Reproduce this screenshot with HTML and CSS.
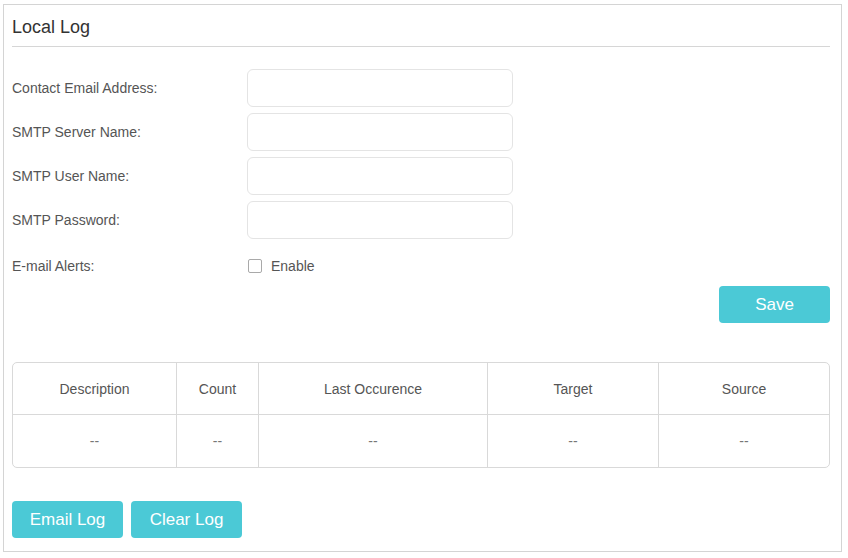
FILE: index.html
```html
<!DOCTYPE html>
<html>
<head>
<meta charset="utf-8">
<link rel="stylesheet" href="styles.css">
</head>
<body>
<div class="frame">
  <h2 class="title">Local Log</h2>
  <div class="form">
    <div class="row">
      <label class="lbl">Contact Email Address:</label>
      <input class="field" type="text">
    </div>
    <div class="row">
      <label class="lbl">SMTP Server Name:</label>
      <input class="field" type="text">
    </div>
    <div class="row">
      <label class="lbl">SMTP User Name:</label>
      <input class="field" type="text">
    </div>
    <div class="row">
      <label class="lbl">SMTP Password:</label>
      <input class="field" type="password">
    </div>
    <div class="row row-check">
      <label class="lbl">E-mail Alerts:</label>
      <span class="check"><span class="box"></span><span class="check-text">Enable</span></span>
    </div>
  </div>
  <div class="save-wrap"><button class="btn btn-save">Save</button></div>
  <table class="log">
    <colgroup>
      <col style="width:164px"><col style="width:82px"><col style="width:229px"><col style="width:171px"><col>
    </colgroup>
    <thead>
      <tr><th>Description</th><th>Count</th><th>Last Occurence</th><th>Target</th><th>Source</th></tr>
    </thead>
    <tbody>
      <tr><td>--</td><td>--</td><td>--</td><td>--</td><td>--</td></tr>
    </tbody>
  </table>
  <div class="actions">
    <button class="btn">Email Log</button>
    <button class="btn">Clear Log</button>
  </div>
</div>
</body>
</html>
```
FILE: styles.css
```css
html, body {
  margin: 0;
  padding: 0;
  background: #fff;
}
body {
  font-family: "Liberation Sans", Arial, sans-serif;
  color: #555;
}
.frame {
  margin: 4px 6px 0 3px;
  height: 546px;
  border: 1px solid #d4d4d4;
  padding: 0 11px 0 8px;
  box-sizing: content-box;
}
.title {
  margin: 0;
  padding: 10px 0 7px 0;
  font-size: 18px;
  line-height: 24px;
  font-weight: normal;
  color: #333;
  border-bottom: 1px solid #d6d6d6;
}
.form {
  padding-top: 22px;
}
.row {
  display: flex;
  align-items: center;
  height: 38px;
  margin-bottom: 6px;
}
.row-check {
  height: 26px;
  margin-top: 14px;
  margin-bottom: 0;
}
.lbl {
  width: 235px;
  flex: none;
  font-size: 14px;
  color: #555;
}
.field {
  width: 266px;
  height: 38px;
  box-sizing: border-box;
  border: 1px solid #e4e4e4;
  border-radius: 6px;
  background: #fff;
  margin: 0;
  padding: 0 10px;
  outline: none;
}
.check {
  display: flex;
  align-items: center;
  margin-left: 1px;
}
.box {
  width: 14px;
  height: 14px;
  box-sizing: border-box;
  border: 1px solid #a9a9a9;
  border-radius: 2px;
  background: #fff;
}
.check-text {
  margin-left: 9px;
  font-size: 14px;
  color: #555;
}
.save-wrap {
  display: flex;
  justify-content: flex-end;
  margin-top: 7px;
}
.btn {
  width: 111px;
  height: 37px;
  border: none;
  border-radius: 4px;
  background: #4bc9d6;
  color: #fff;
  font-family: "Liberation Sans", Arial, sans-serif;
  font-size: 17px;
  padding: 0;
  margin: 0;
}
.log {
  margin-top: 39px;
  width: 100%;
  table-layout: fixed;
  border-collapse: separate;
  border-spacing: 0;
  border: 1px solid #d9d9d9;
  border-radius: 5px;
}
.log th, .log td {
  text-align: center;
  font-size: 14px;
  font-weight: normal;
  padding: 0;
  border-right: 1px solid #d9d9d9;
}
.log th:last-child, .log td:last-child {
  border-right: none;
}
.log th {
  height: 51px;
  color: #555;
  border-bottom: 1px solid #d9d9d9;
}
.log td {
  height: 52px;
  color: #777;
}
.actions {
  display: flex;
  gap: 8px;
  margin-top: 33px;
}
```
